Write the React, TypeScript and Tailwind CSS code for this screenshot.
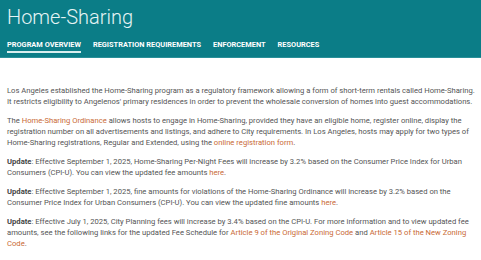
const links = ['PROGRAM OVERVIEW', 'REGISTRATION REQUIREMENTS', 'ENFORCEMENT', 'RESOURCES'];

const A = ({ children }: { children: React.ReactNode }) => (
    <a href="#" className="text-[#c96a35]">{children}</a>
);

export default function App() {
    return (
        <div className="w-[481px] h-[260px] bg-white overflow-hidden" style={{ fontFamily: 'Roboto, sans-serif' }}>
            <header className="bg-[#0b7d87] h-[58px] px-[7px] pt-[4px] border-b border-[#2a9099]">
                <h1 className="text-[20px] leading-[26px] font-light text-[#e6f4f5]">Home-Sharing</h1>
                <nav className="flex gap-[12px] mt-[10px]">
                    {links.map((l, i) => (
                        <span
                            key={l}
                            className={`text-[7.4px] leading-[10px] font-bold text-white pb-[1px] ${i === 0 ? 'border-b-2 border-[#d8eeee]' : ''}`}
                        >
                            {l}
                        </span>
                    ))}
                </nav>
            </header>
            <main className="pl-[7px] pr-[1px] pt-[27px] text-[7.65px] leading-[11px] text-[#555] flex flex-col gap-[8px]">
                <p>
                    Los Angeles established the Home-Sharing program as a regulatory framework allowing a form of short-term rentals called Home-Sharing. It restricts eligibility to Angelenos' primary residences in order to prevent the wholesale conversion of homes into guest accommodations.
                </p>
                <p>
                    The <A>Home-Sharing Ordinance</A> allows hosts to engage in Home-Sharing, provided they have an eligible home, register online, display the registration number on all advertisements and listings, and adhere to City requirements. In Los Angeles, hosts may apply for two types of Home-Sharing registrations, Regular and Extended, using the <A>online registration form</A>.
                </p>
                <p>
                    <b className="text-[#444]">Update</b>: Effective September 1, 2025, Home-Sharing Per-Night Fees will increase by 3.2% based on the Consumer Price Index for Urban Consumers (CPI-U). You can view the updated fee amounts <A>here</A>.
                </p>
                <p>
                    <b className="text-[#444]">Update</b>: Effective September 1, 2025, fine amounts for violations of the Home-Sharing Ordinance will increase by 3.2% based on the Consumer Price Index for Urban Consumers (CPI-U). You can view the updated fine amounts <A>here</A>.
                </p>
                <p>
                    <b className="text-[#444]">Update</b>: Effective July 1, 2025, City Planning fees will increase by 3.4% based on the CPI-U. For more information and to view updated fee amounts, see the following links for the updated Fee Schedule for <A>Article 9 of the Original Zoning Code</A> and <A>Article 15 of the New Zoning Code</A>.
                </p>
            </main>
        </div>
    );
}
